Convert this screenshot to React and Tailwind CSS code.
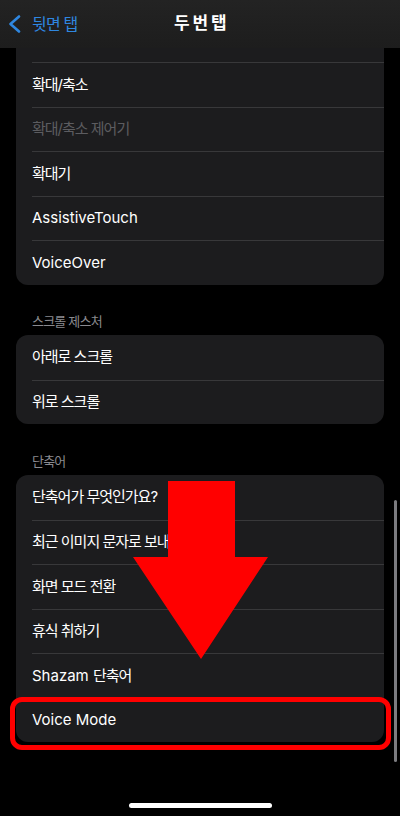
import React from "react";

const font = { fontFamily: 'Inter, "Noto Sans CJK KR", sans-serif' };

function Row({ children, first, dim }) {
  return (
    <div
      className={`ml-4 flex h-[44.5px] items-center pr-4 text-[15px] ${first ? "" : "border-t border-[#38383a]"} ${dim ? "text-[#5c5c60]" : "text-white"}`}
    >
      {children}
    </div>
  );
}

const K = ({ children }) => <span className="tracking-[-1px]">{children}</span>;

function Header({ children, pt }) {
  return (
    <div className={`${pt} pb-[6px] pl-8 text-[13px] leading-4 tracking-[-0.8px] text-[#8a8a8f]`}>
      {children}
    </div>
  );
}

export default function App() {
  return (
    <div className="relative h-[816px] w-[400px] overflow-hidden bg-black" style={font}>
      {/* Nav bar */}
      <div className="relative flex h-12 items-center bg-gradient-to-b from-[#232323] to-[#1d1d1d]">
        <div className="flex items-center pl-[8px] text-[#2f87e0]">
          <svg width="14" height="18" viewBox="0 0 14 18" className="mr-[10px]">
            <path d="M11 1.5 L2.5 9 L11 16.5" fill="none" stroke="#2f87e0" strokeWidth="2.6" strokeLinecap="round" strokeLinejoin="round" />
          </svg>
          <span className="text-[16px] tracking-[-0.8px]">뒷면 탭</span>
        </div>
        <div className="absolute left-0 right-0 top-0 flex h-12 items-center justify-center">
          <span className="text-[17px] font-bold tracking-[-0.6px] text-white">두 번 탭</span>
        </div>
      </div>

      {/* Card 1 */}
      <div className="mx-4 rounded-b-[12px] bg-[#1c1c1e]">
        <div className="h-[14px]" />
        <Row><K>확대/축소</K></Row>
        <Row dim><K>확대/축소 제어기</K></Row>
        <Row><K>확대기</K></Row>
        <Row>AssistiveTouch</Row>
        <Row>VoiceOver</Row>
      </div>

      <Header pt="pt-[28.5px]">스크롤 제스처</Header>
      <div className="mx-4 rounded-[12px] bg-[#1c1c1e]">
        <Row first><K>아래로 스크롤</K></Row>
        <Row><K>위로 스크롤</K></Row>
      </div>

      <Header pt="pt-[29px]">단축어</Header>
      <div className="mx-4 rounded-[12px] bg-[#1c1c1e]">
        <Row first><K>단축어가 무엇인가요?</K></Row>
        <Row><K>최근 이미지 문자로 보내기</K></Row>
        <Row><K>화면 모드 전환</K></Row>
        <Row><K>휴식 취하기</K></Row>
        <Row>Shazam&nbsp;<K>단축어</K></Row>
        <Row>Voice Mode</Row>
      </div>

      {/* Home indicator */}
      <div className="mx-auto mt-[61px] h-[5px] w-[143px] rounded-full bg-white" />

      {/* Scrollbar */}
      <div className="absolute left-[394px] top-[500px] h-[262px] w-[3px] rounded-full bg-[#7c7c80]" />

      {/* Red arrow */}
      <svg className="absolute left-0 top-0" width="400" height="816" viewBox="0 0 400 816">
        <polygon points="168,481 235,481 235,557 268,557 201,659 133,557 168,557" fill="#ff0000" />
      </svg>

      {/* Red highlight box */}
      <div className="absolute left-[10px] top-[697px] h-[53px] w-[381px] rounded-[12px] border-[5px] border-[#ff0000]" />
    </div>
  );
}
